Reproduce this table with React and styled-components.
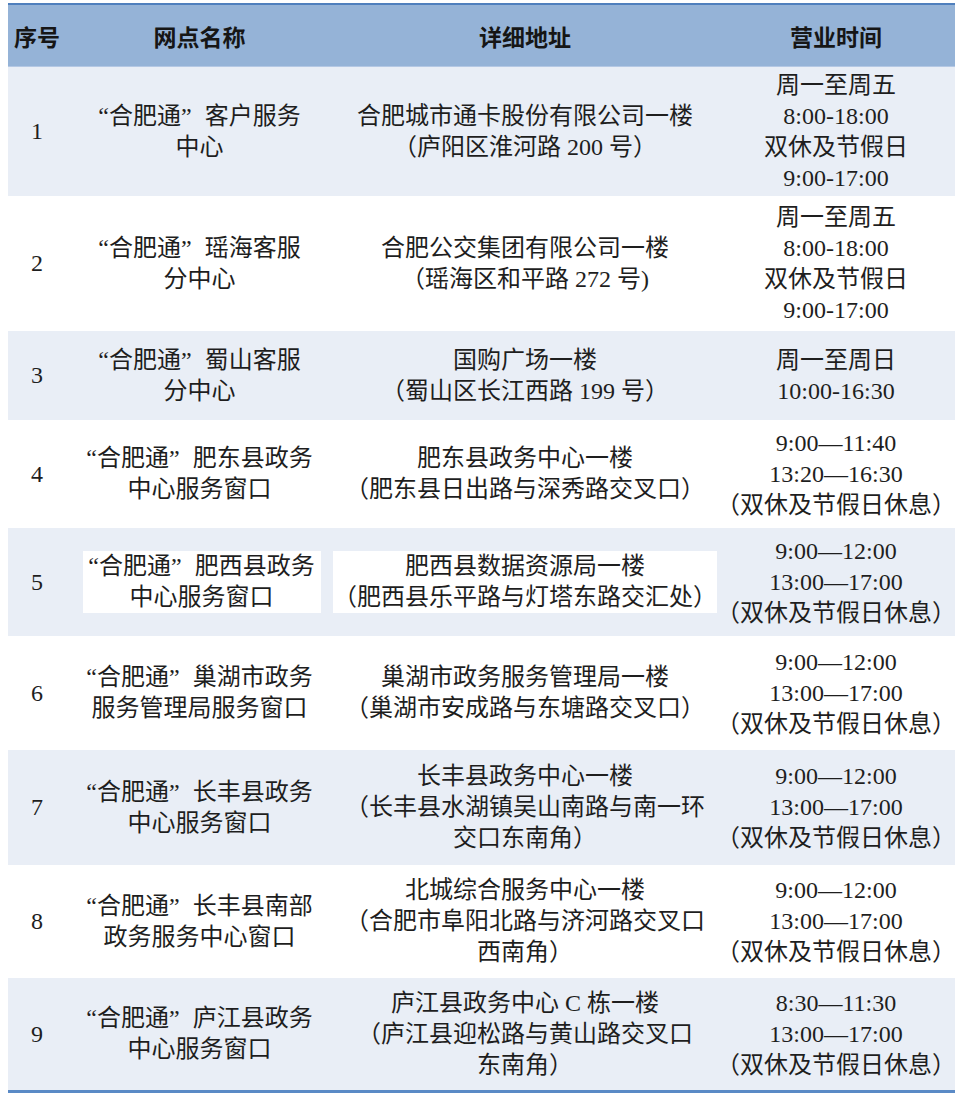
import React from 'react';
import styled, { createGlobalStyle } from 'styled-components';

const GlobalStyle = createGlobalStyle`
  html, body {
    margin: 0;
    padding: 0;
    background: #ffffff;
  }
`;

const Page = styled.div`
  padding: 3px 0 0 8px;
  font-family: "Liberation Serif", "Noto Sans CJK SC", serif;
  color: #1e1e1e;
`;

const Table = styled.div`
  width: 947px;
  border-top: 2px solid #4f7fbd;
  border-bottom: 3px solid #5a8ac6;
`;

const Row = styled.div`
  display: grid;
  grid-template-columns: 58px 267px 384px 238px;
  height: ${(p) => p.$h}px;
  background: ${(p) => (p.$shade ? '#e9eef6' : '#ffffff')};
`;

const HeaderRow = styled(Row)`
  background: #95b3d7;
  border-bottom: 1px solid #b4c8e4;
`;

const HeadCell = styled.div`
  display: flex;
  align-items: center;
  justify-content: center;
  font-family: "Noto Sans CJK SC", "Liberation Sans", sans-serif;
  font-weight: 700;
  font-size: 23px;
  color: #161616;
  white-space: nowrap;
`;

const Cell = styled.div`
  display: flex;
  align-items: center;
  justify-content: center;
  text-align: center;
  font-size: 24px;
  line-height: 31px;
  white-space: nowrap;
`;

const Lines = styled.div`
  display: flex;
  flex-direction: column;
  align-items: center;
  background: ${(p) => (p.$mark ? '#ffffff' : 'transparent')};
  width: ${(p) => (p.$w ? `${p.$w}px` : 'auto')};
  margin-left: ${(p) => (p.$shift ? `${p.$shift}px` : '0')};
`;

const Line = styled.span`
  display: block;
`;

const CloseQuote = styled.span`
  padding-right: 13px;
`;

const weekday = ['周一至周五', '8:00-18:00', '双休及节假日', '9:00-17:00'];
const office = ['9:00—12:00', '13:00—17:00', '（双休及节假日休息）'];

const rows = [
  {
    no: '1', h: 129,
    name: ['“合肥通”客户服务', '中心'],
    addr: ['合肥城市通卡股份有限公司一楼', '（庐阳区淮河路 200 号）'],
    time: weekday,
  },
  {
    no: '2', h: 135,
    name: ['“合肥通”瑶海客服', '分中心'],
    addr: ['合肥公交集团有限公司一楼', '（瑶海区和平路 272 号)'],
    time: weekday,
  },
  {
    no: '3', h: 89,
    name: ['“合肥通”蜀山客服', '分中心'],
    addr: ['国购广场一楼', '（蜀山区长江西路 199 号）'],
    time: ['周一至周日', '10:00-16:30'],
  },
  {
    no: '4', h: 108,
    name: ['“合肥通”肥东县政务', '中心服务窗口'],
    addr: ['肥东县政务中心一楼', '（肥东县日出路与深秀路交叉口）'],
    time: ['9:00—11:40', '13:20—16:30', '（双休及节假日休息）'],
  },
  {
    no: '5', h: 108, mark: true,
    name: ['“合肥通”肥西县政务', '中心服务窗口'],
    addr: ['肥西县数据资源局一楼', '（肥西县乐平路与灯塔东路交汇处）'],
    time: office,
  },
  {
    no: '6', h: 114,
    name: ['“合肥通”巢湖市政务', '服务管理局服务窗口'],
    addr: ['巢湖市政务服务管理局一楼', '（巢湖市安成路与东塘路交叉口）'],
    time: office,
  },
  {
    no: '7', h: 115,
    name: ['“合肥通”长丰县政务', '中心服务窗口'],
    addr: ['长丰县政务中心一楼', '（长丰县水湖镇吴山南路与南一环', '交口东南角）'],
    time: office,
  },
  {
    no: '8', h: 113,
    name: ['“合肥通”长丰县南部', '政务服务中心窗口'],
    addr: ['北城综合服务中心一楼', '（合肥市阜阳北路与济河路交叉口', '西南角）'],
    time: office,
  },
  {
    no: '9', h: 112,
    name: ['“合肥通”庐江县政务', '中心服务窗口'],
    addr: ['庐江县政务中心 C 栋一楼', '（庐江县迎松路与黄山路交叉口', '东南角）'],
    time: ['8:30—11:30', '13:00—17:00', '（双休及节假日休息）'],
  },
];

// the closing quote sits in a wide slot in the source, so give it room
function withQuotes(text) {
  const parts = text.split('”');
  if (parts.length < 2) return text;
  return (
    <>
      {parts[0]}
      <CloseQuote>”</CloseQuote>
      {parts.slice(1).join('”')}
    </>
  );
}

function TextBlock({ lines, mark, w, shift }) {
  return (
    <Lines $mark={mark} $w={w} $shift={shift}>
      {lines.map((l, i) => (
        <Line key={i}>{withQuotes(l)}</Line>
      ))}
    </Lines>
  );
}

export default function App() {
  return (
    <Page>
      <GlobalStyle />
      <Table>
        <HeaderRow $h={61}>
          <HeadCell>序号</HeadCell>
          <HeadCell>网点名称</HeadCell>
          <HeadCell>详细地址</HeadCell>
          <HeadCell>营业时间</HeadCell>
        </HeaderRow>
        {rows.map((r, i) => (
          <Row key={r.no} $h={r.h} $shade={i % 2 === 0}>
            <Cell>{r.no}</Cell>
            <Cell>
              <TextBlock lines={r.name} mark={r.mark} w={r.mark ? 238 : 0} shift={r.mark ? 4 : 0} />
            </Cell>
            <Cell>
              <TextBlock lines={r.addr} mark={r.mark} w={r.mark ? 385 : 0} />
            </Cell>
            <Cell>
              <TextBlock lines={r.time} />
            </Cell>
          </Row>
        ))}
      </Table>
    </Page>
  );
}
